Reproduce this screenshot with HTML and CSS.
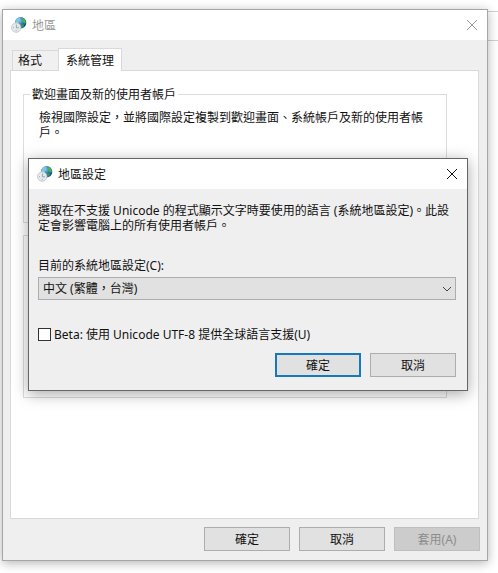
FILE: index.html
```
<!DOCTYPE html>
<html lang="zh-Hant-TW">
    <head>
        <meta charset="utf-8">
        <title>地區</title>
        <link rel="stylesheet" href="styles.css">
    </head>
    <body>
        <svg class="defs" width="0" height="0">
            <defs>
                <radialGradient id="sea" cx="0.4" cy="0.3" r="0.75">
                    <stop offset="0" stop-color="#8cc8f0"/>
                    <stop offset="0.5" stop-color="#2f6fc4"/>
                    <stop offset="1" stop-color="#102f86"/>
                </radialGradient>
                <symbol id="region" viewBox="0 0 16 16">
                    <circle cx="9.6" cy="5.8" r="5.7" fill="url(#sea)"/>
                    <path d="M4.6 3.4C6 1.2 8 .3 9.8.5L8.8 2 9.6 3.2 7.6 4.6 8 6 6 7 4 6z" fill="#7fcbd2"/>
                    <path d="M11.2 1.2l2.2.8 1.4 2.4-.4 2.2-1.6-.4-.8-1.8-1.6-.8z" fill="#49b83c"/>
                    <path d="M10 6.6l2.4.6.8 1.4-1.8 2.4-1.2-.4z" fill="#2d9a45"/>
                    <circle cx="5.2" cy="10.6" r="4.7" fill="#e4e9ec" stroke="#c3cace" stroke-width="0.9"/>
                    <path d="M5.4 7.6v3.2H8M2.2 10.6h.8M5.2 13v.8" fill="none" stroke="#8a959c" stroke-width="0.8"/>
                </symbol>
            </defs>
        </svg>
        <div class="behind"></div>

        <main class="window">
            <header class="titlebar">
                <svg class="icon"><use href="#region"/></svg>
                <h1>地區</h1>
                <button class="close" aria-label="關閉">
                    <svg width="12" height="12" viewBox="0 0 12 12"><path d="M1 1l10 10M11 1L1 11"/></svg>
                </button>
            </header>
            <div class="body">
                <nav class="tabs">
                    <button class="tab">格式</button>
                    <button class="tab active">系統管理</button>
                </nav>
                <div class="panel">
                    <fieldset class="group welcome">
                        <legend>歡迎畫面及新的使用者帳戶</legend>
                        <p>檢視國際設定，並將國際設定複製到歡迎畫面、系統帳戶及新的使用者帳戶。</p>
                    </fieldset>
                    <fieldset class="group locale"></fieldset>
                </div>
                <div class="buttons">
                    <button class="btn">確定</button>
                    <button class="btn">取消</button>
                    <button class="btn" disabled>套用(A)</button>
                </div>
            </div>
        </main>

        <section class="dialog" role="dialog" aria-labelledby="dialogTitle">
            <header class="titlebar">
                <svg class="icon"><use href="#region"/></svg>
                <h2 id="dialogTitle">地區設定</h2>
                <button class="close" aria-label="關閉">
                    <svg width="12" height="12" viewBox="0 0 12 12"><path d="M1 1l10 10M11 1L1 11"/></svg>
                </button>
            </header>
            <form class="form">
                <p>選取在不支援 Unicode 的程式顯示文字時要使用的語言 (系統地區設定)。此設定會影響電腦上的所有使用者帳戶。</p>
                <label class="caption" for="systemLocale">目前的系統地區設定(C):</label>
                <div class="combo">
                    <select id="systemLocale">
                        <option>中文 (繁體，台灣)</option>
                    </select>
                    <svg width="10" height="6" viewBox="0 0 10 6"><path d="M1 1l4 4 4-4"/></svg>
                </div>
                <div class="check">
                    <input type="checkbox" id="utf8">
                    <label for="utf8">Beta: 使用 Unicode UTF-8 提供全球語言支援(U)</label>
                </div>
                <div class="buttons">
                    <button type="button" class="btn default">確定</button>
                    <button type="button" class="btn">取消</button>
                </div>
            </form>
        </section>
    </body>
</html>
```
FILE: styles.css
```
*{
    box-sizing: border-box;
}
body{
    margin: 0;
    padding: 9px 10px 12px 2px;
    position: relative;
    background-color: #fff;
    color: #111;
    font: 12px/15px "Noto Sans", "Noto Sans CJK TC", sans-serif;
}
h1, h2, p, fieldset{
    margin: 0;
    font-size: 12px;
    font-weight: inherit;
}
button, select, input{
    font: inherit;
    color: inherit;
    margin: 0;
}
.defs{
    position: absolute;
}
/* edge of the window further back */
.behind{
    position: absolute;
    left: 50%;
    right: 0;
    top: 11px;
    height: 30px;
    border: 1px solid #d0d0d0;
    border-width: 1px 0;
}
.window{
    position: relative;
    border: 1px solid #a6a6a6;
    background-color: #efefef;
    box-shadow: 0 2px 10px rgba(0,0,0,0.3);
}
.titlebar{
    display: flex;
    align-items: center;
    height: 30px;
    padding: 0 8px;
    background-color: #fff;
}
.titlebar h1, .titlebar h2{
    flex: 1;
    margin-left: 5px;
}
.window .titlebar{
    color: #999;
}
.icon{
    width: 16px;
    height: 16px;
}
.close{
    display: flex;
    padding: 2px 1px;
    border: 0;
    background: none;
}
.close path, .combo path{
    fill: none;
    stroke: currentColor;
}
.body{
    padding: 8px 7px 9px;
}
.tabs{
    display: flex;
    align-items: flex-end;
    padding-left: 2px;
}
.tab{
    height: 20px;
    padding: 0 16px 0 5px;
    border: 1px solid #d9d9d9;
    border-width: 1px 0 0 1px;
    background-color: #f0f0f0;
}
.tab.active{
    position: relative;
    height: 23px;
    margin-bottom: -1px;
    padding: 0 7px;
    border-width: 1px 1px 0;
    background-color: #fff;
}
.panel{
    height: 449px;
    margin-right: 1px;
    padding: 16px 31px 0 12px;
    border: 1px solid #d9d9d9;
    background-color: #fff;
}
.group{
    padding: 0 20px 0 15px;
    border: 1px solid #dcdcdc;
}
.group legend{
    margin-left: -9px;
    padding: 0 2px;
}
.welcome{
    height: 136px;
}
.welcome p{
    padding-top: 8px;
}
.locale{
    height: 163px;
    margin-top: 12px;
}
.buttons{
    display: flex;
    justify-content: flex-end;
    gap: 9px;
}
.body .buttons{
    margin-top: 8px;
}
.btn{
    width: 86px;
    height: 24px;
    padding: 0;
    border: 1px solid #adadad;
    background-color: #e1e1e1;
}
.btn.default{
    border: 2px solid #1479bd;
}
.btn:disabled{
    border-color: #bfbfbf;
    background-color: #ccc;
    color: #8c8c8c;
}
.dialog{
    position: absolute;
    left: 28px;
    right: 30px;
    top: 158px;
    border: 1px solid #666;
    background-color: #efefef;
    box-shadow: 0 3px 14px rgba(0,0,0,0.35);
}
.form{
    padding: 14px 11px 13px 9px;
}
.caption{
    display: block;
    margin: 25px 0 4px;
}
.combo{
    position: relative;
}
.combo select{
    appearance: none;
    display: block;
    width: 100%;
    height: 23px;
    padding: 0 20px 0 4px;
    border: 1px solid #adadad;
    border-radius: 0;
    background-color: #e1e1e1;
}
.combo svg{
    position: absolute;
    right: 4px;
    top: 9px;
    color: #444;
    pointer-events: none;
}
.check{
    display: flex;
    align-items: center;
    gap: 3px;
    margin: 27px 0 11px;
}
.check input{
    appearance: none;
    width: 13px;
    height: 13px;
    border: 1px solid #333;
    background-color: #fff;
}
```
